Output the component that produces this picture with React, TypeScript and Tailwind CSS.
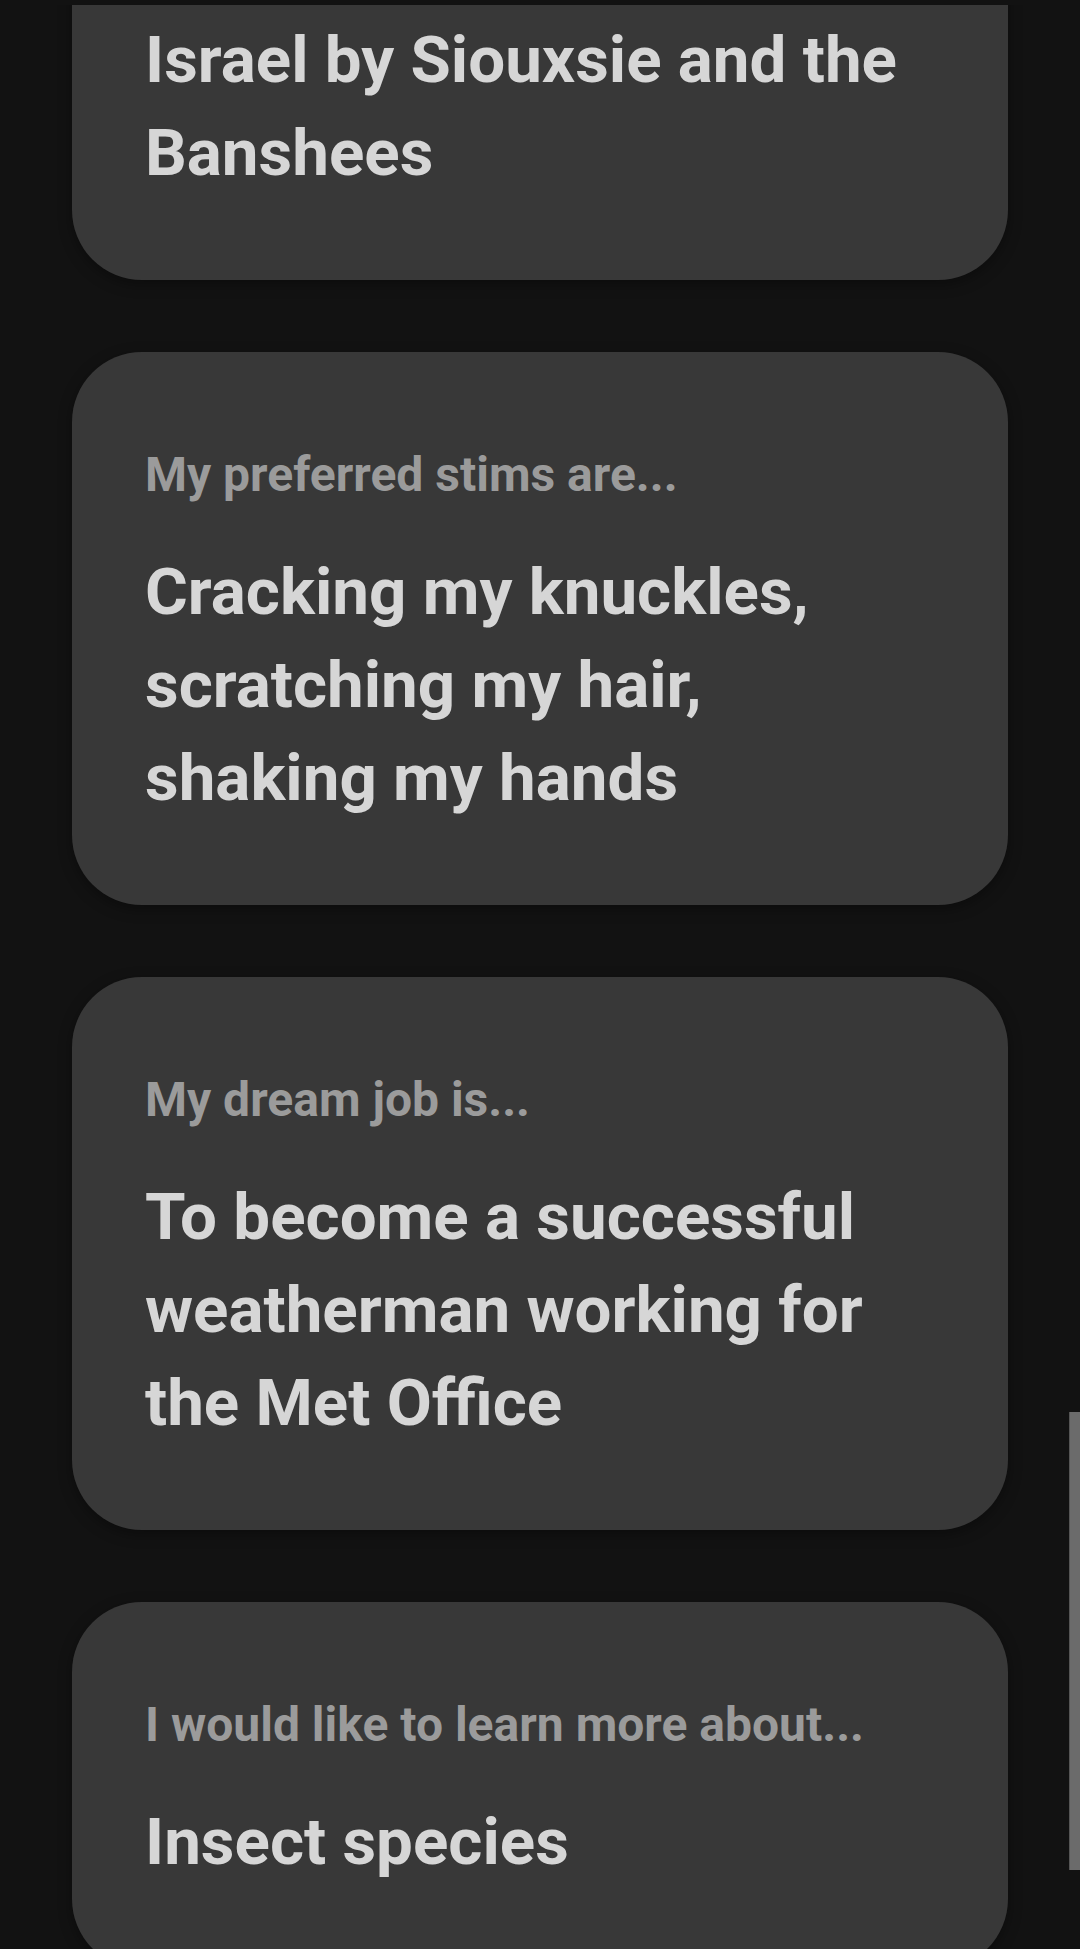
import React from 'react'

type Prompt = { label?: string; answer: string }

const prompts: Prompt[] = [
  { label: 'My preferred stims are...', answer: 'Cracking my knuckles, scratching my hair, shaking my hands' },
  { label: 'My dream job is...', answer: 'To become a successful weatherman working for the Met Office' },
  { label: 'I would like to learn more about...', answer: 'Insect species' },
]

function PromptCard({ label, answer, className = '' }: Prompt & { className?: string }) {
  return (
    <div className={`rounded-[70px] bg-[#383838] pl-[73px] pr-[80px] pt-[91px] pb-[81px] shadow-[0_4px_14px_rgba(0,0,0,0.35)] ${className}`}>
      {label && (
        <p className="text-[48px] leading-[64px] font-bold text-[#9b9b9b]">{label}</p>
      )}
      <p className={`${label ? 'mt-[38px]' : ''} text-[65.5px] leading-[93px] font-bold text-[#d6d6d6]`}>{answer}</p>
    </div>
  )
}

export default function App() {
  return (
    <div className="relative h-[1949px] w-[1080px] overflow-hidden bg-[#121212] pt-[5px] font-['Roboto',sans-serif]">
      <div className="h-full overflow-hidden">
        <div className="-mt-[83px] flex flex-col gap-[72px] px-[72px]">
          <PromptCard answer="Israel by Siouxsie and the Banshees" />
          {prompts.map((p) => (
            <PromptCard key={p.label} {...p} />
          ))}
        </div>
      </div>
      {/* scroll thumb */}
      <div className="absolute right-0 top-[1412px] h-[458px] w-[11px] border-l border-[#555] bg-[#6b6b6b]" />
    </div>
  )
}
